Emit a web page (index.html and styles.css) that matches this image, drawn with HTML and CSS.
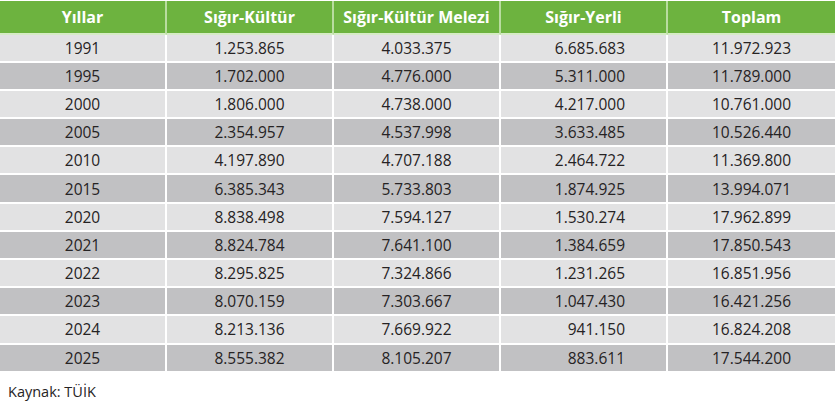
FILE: index.html
```html
<!DOCTYPE html>
<html lang="tr">
<head>
<meta charset="utf-8">
<link rel="stylesheet" href="styles.css">
</head>
<body>
<table class="data">
  <thead>
    <tr><th>Yıllar</th><th>Sığır-Kültür</th><th>Sığır-Kültür Melezi</th><th>Sığır-Yerli</th><th>Toplam</th></tr>
  </thead>
  <tbody>
    <tr><td>1991</td><td>1.253.865</td><td>4.033.375</td><td class="r">6.685.683</td><td>11.972.923</td></tr>
    <tr><td>1995</td><td>1.702.000</td><td>4.776.000</td><td class="r">5.311.000</td><td>11.789.000</td></tr>
    <tr><td>2000</td><td>1.806.000</td><td>4.738.000</td><td class="r">4.217.000</td><td>10.761.000</td></tr>
    <tr><td>2005</td><td>2.354.957</td><td>4.537.998</td><td class="r">3.633.485</td><td>10.526.440</td></tr>
    <tr><td>2010</td><td>4.197.890</td><td>4.707.188</td><td class="r">2.464.722</td><td>11.369.800</td></tr>
    <tr><td>2015</td><td>6.385.343</td><td>5.733.803</td><td class="r">1.874.925</td><td>13.994.071</td></tr>
    <tr><td>2020</td><td>8.838.498</td><td>7.594.127</td><td class="r">1.530.274</td><td>17.962.899</td></tr>
    <tr><td>2021</td><td>8.824.784</td><td>7.641.100</td><td class="r">1.384.659</td><td>17.850.543</td></tr>
    <tr><td>2022</td><td>8.295.825</td><td>7.324.866</td><td class="r">1.231.265</td><td>16.851.956</td></tr>
    <tr><td>2023</td><td>8.070.159</td><td>7.303.667</td><td class="r">1.047.430</td><td>16.421.256</td></tr>
    <tr><td>2024</td><td>8.213.136</td><td>7.669.922</td><td class="r">941.150</td><td>16.824.208</td></tr>
    <tr><td>2025</td><td>8.555.382</td><td>8.105.207</td><td class="r">883.611</td><td>17.544.200</td></tr>
  </tbody>
</table>
<p class="source">Kaynak: TÜİK</p>
</body>
</html>
```
FILE: styles.css
```css
html, body {
  margin: 0;
  padding: 0;
  background: #ffffff;
}
body {
  font-family: "Open Sans", "Noto Sans", sans-serif;
  color: #262324;
}
.data {
  width: 835px;
  border-collapse: separate;
  border-spacing: 0;
  table-layout: fixed;
  margin-top: 1px;
}
.data th {
  background: #6db33f;
  color: #ffffff;
  font-weight: 700;
  font-size: 16px;
  height: 31.5px;
  padding: 0;
  border-right: 2px solid #b9dc9f;
  border-bottom: 2px solid #d6ebc6;
}
.data td {
  font-size: 15.5px;
  text-align: center;
  height: 26.2px;
  padding: 0;
  border-right: 2px solid #ffffff;
  border-bottom: 2px solid #ffffff;
}
.data th:last-child,
.data td:last-child {
  border-right: none;
}
.data tbody tr:nth-child(odd) td {
  background: #e2e2e3;
}
.data tbody tr:nth-child(even) td {
  background: #c1c1c3;
}
.data td.r {
  text-align: right;
  padding-right: 41px;
}
.source {
  margin: 9px 0 0 8px;
  font-size: 14.5px;
}
```
